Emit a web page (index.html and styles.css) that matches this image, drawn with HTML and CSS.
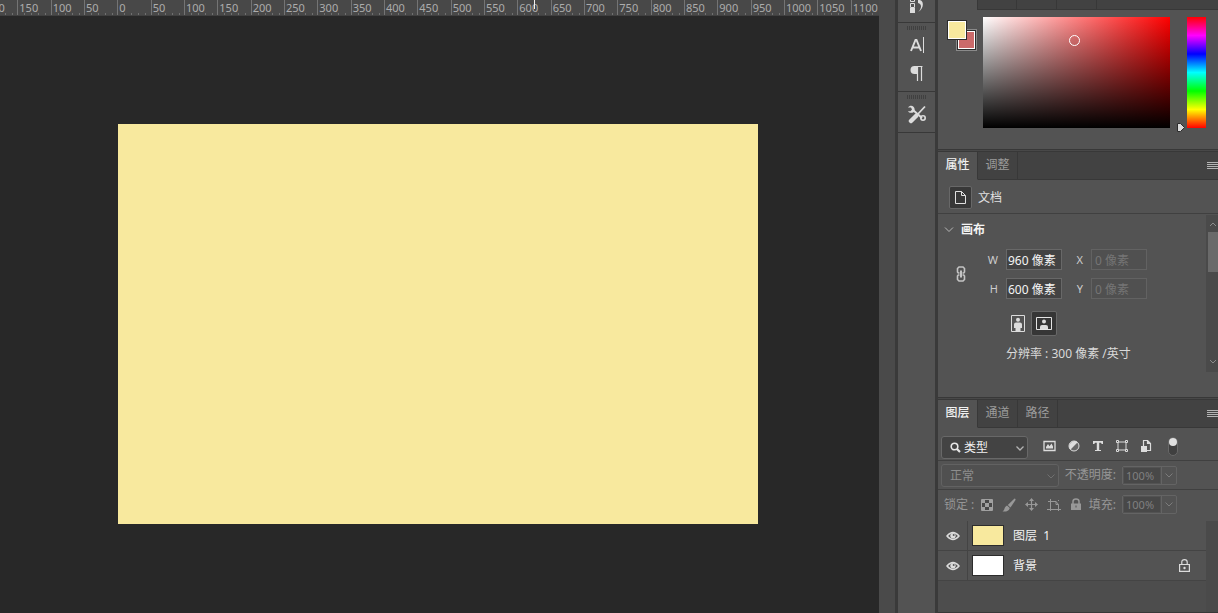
FILE: index.html
```
<!DOCTYPE html>
<html lang="zh-CN">
<head>
<meta charset="utf-8">
<title>图像编辑器</title>
<link rel="stylesheet" href="styles.css">
</head>
<body>
<div class="app">
  <main class="workspace">
    <div class="ruler">
      <div class="ruler-scale">
        <span>200</span><span>150</span><span>100</span><span>50</span><span>0</span><span>50</span><span>100</span><span>150</span><span>200</span><span>250</span><span>300</span><span>350</span><span>400</span><span>450</span><span>500</span><span>550</span><span>600</span><span>650</span><span>700</span><span>750</span><span>800</span><span>850</span><span>900</span><span>950</span><span>1000</span><span>1050</span><span>1100</span>
      </div>
      <i class="ruler-cursor"></i>
    </div>
    <div class="stage"><div class="artboard"></div></div>
  </main>
  <div class="vscroll"></div>

  <nav class="dock" aria-label="折叠面板">
    <div class="dock-group dock-first">
      <button class="dock-btn" aria-label="历史记录">
        <svg width="18" height="18" viewBox="0 0 18 18"><path d="M2.500 2.500h4v4h-4zM2.500 8.500h4v4h-4z" fill="none" stroke="#dcdcdc"/><path d="M2 13h5v5H2z" fill="#dcdcdc"/><path d="M10 5c6-1 7 8 0 12 4-4 4-8 0-9z" fill="#dcdcdc"/></svg>
      </button>
    </div>
    <div class="dock-group">
      <i class="grip"></i>
      <button class="dock-btn" aria-label="字符">
        <svg width="18" height="18" viewBox="0 0 18 18"><path d="M3 15 7.500 4h1L13 15M4.500 11.500h7" fill="none" stroke="#dcdcdc" stroke-width="1.900"/><path d="M15.500 1v16" stroke="#dcdcdc"/></svg>
      </button>
      <button class="dock-btn" aria-label="段落">
        <svg width="18" height="18" viewBox="0 0 18 18"><path d="M8 2H6.500a4 4 0 0 0 0 8H9V2z" fill="#dcdcdc"/><path d="M6 2.500h8.500M9.500 2v15M13.500 2v15" fill="none" stroke="#dcdcdc" stroke-width="1.200"/></svg>
      </button>
    </div>
    <div class="dock-group dock-short">
      <i class="grip"></i>
      <button class="dock-btn" aria-label="工具预设">
        <svg width="20" height="20" viewBox="0 0 20 20" fill="none" stroke="#dcdcdc"><path d="m6 6 9 8" stroke-width="1.900"/><path d="M1 3.500h3l1 2-1.500 1.700H1c1 2 4 2 5.500 1S8 4 6.500 2.700 2.500 1.500 1 3.500z" fill="#dcdcdc" stroke="none"/><circle cx="16" cy="14" r="2.200" stroke-width="1.600"/><path d="m18 2.500-8 8.500" stroke-width="1.800"/><path d="m9 12-5 5" stroke-width="4.500" stroke-linecap="round"/></svg>
      </button>
    </div>
  </nav>

  <aside class="panels">
    <section class="panel color-panel">
      <div class="tabbar tabbar-cut"><i></i><i></i><i></i></div>
      <div class="color-body">
        <div class="swatches"><button class="swatch swatch-back" aria-label="背景色"></button><button class="swatch swatch-front" aria-label="前景色"></button></div>
        <div class="spectrum"><i class="ring"></i></div>
        <div class="hue">
          <svg class="hue-mark" width="10" height="11" viewBox="0 0 10 11"><path d="M1.500 1.500h3l4 4-4 4h-3z" fill="#dcdcdc" stroke="#2c2c2c"/></svg>
        </div>
      </div>
    </section>

    <section class="panel props-panel">
      <div class="tabbar">
        <button class="tab active">属性</button><button class="tab">调整</button>
        <button class="menu" aria-label="面板菜单"></button>
      </div>
      <div class="doc-row">
        <button class="doc-btn" aria-label="文档">
          <svg width="13" height="15" viewBox="0 0 13 15" fill="none" stroke="#e0e0e0"><path d="M1.500 1.500h6l4 4v8h-10zM7.500 1.500v4h4"/></svg>
        </button>
        <span>文档</span>
      </div>
      <div class="props-body">
        <div class="canvas-form">
          <h2 class="section-title"><svg width="10" height="6" viewBox="0 0 10 6" fill="none" stroke="#b8b8b8"><path d="m1 .5 4 4 4-4"/></svg>画布</h2>
          <div class="size-grid">
            <button class="link-btn" aria-label="链接">
              <svg width="10" height="16" viewBox="0 0 10 16" fill="none" stroke="#c4c4c4" stroke-width="1.600"><path d="M3.500 7H2.300L1.500 6V2.500L3 1h4l1.500 1.500V6l-.8 1H6.500M3.500 9H2.300l-.8 1v3.500L3 15h4l1.500-1.500V10l-.8-1H6.500"/><path d="M5 4.500v7" stroke-width="2"/></svg>
            </button>
            <label for="w">W</label><input id="w" value="960 像素">
            <label for="x">X</label><input id="x" value="0 像素" disabled>
            <label for="h">H</label><input id="h" value="600 像素">
            <label for="y">Y</label><input id="y" value="0 像素" disabled>
          </div>
          <div class="orient">
            <button class="orient-btn" aria-label="纵向">
              <svg width="14" height="17" viewBox="0 0 14 17"><path d="M.5.500h13v16H.5z" fill="none" stroke="#dcdcdc"/><circle cx="7" cy="4.800" r="2" fill="#dcdcdc"/><path d="M5 7.500h4q2 0 2 2V13H9.500v3h-5v-3H3V9.500q0-2 2-2z" fill="#dcdcdc"/></svg>
            </button>
            <button class="orient-btn chosen" aria-label="横向">
              <svg width="16" height="13" viewBox="0 0 16 13"><path d="M.5.500h15v12H.5z" fill="none" stroke="#e4e4e4"/><circle cx="8" cy="4.500" r="2" fill="#dcdcdc"/><path d="M4 12v-2q0-2 2-2h4q2 0 2 2v2z" fill="#dcdcdc"/></svg>
            </button>
          </div>
          <p class="resolution">分辨率 : 300 像素 /英寸</p>
        </div>
        <div class="scrollbar">
          <svg width="8" height="5" viewBox="0 0 8 5" fill="none" stroke="#8c8c8c"><path d="m1 4 3-3 3 3"/></svg>
          <i class="thumb"></i>
          <svg class="down" width="8" height="5" viewBox="0 0 8 5" fill="none" stroke="#8c8c8c"><path d="m1 1 3 3 3-3"/></svg>
        </div>
      </div>
    </section>

    <section class="panel layers-panel">
      <div class="tabbar">
        <button class="tab active">图层</button><button class="tab">通道</button><button class="tab">路径</button>
        <button class="menu" aria-label="面板菜单"></button>
      </div>
      <div class="filter-row">
        <div class="select-box kind">
          <svg class="lens" width="11" height="11" viewBox="0 0 11 11" fill="none" stroke="#e6e6e6"><circle cx="4.500" cy="4.500" r="3.300" stroke-width="1.600"/><path d="m7 7 3 3" stroke-width="2.200"/></svg>
          <select aria-label="过滤类型"><option>类型</option></select>
          <svg class="arrow" width="8" height="5" viewBox="0 0 8 5" fill="none" stroke="#b4b4b4" stroke-width="1.300"><path d="m.5.500 3.500 3.500 3.500-3.500"/></svg>
        </div>
        <div class="filters">
          <button aria-label="像素图层"><svg width="13" height="12" viewBox="0 0 13 12"><path d="M1 1.500h11v9H1z" fill="none" stroke="#dcdcdc" stroke-width="1.300"/><path d="M3 8.500V7l2-3 1.500 2.200L8.500 3.500 10 6.500v2z" fill="#dcdcdc"/></svg></button>
          <button aria-label="调整图层"><svg width="12" height="12" viewBox="0 0 12 12"><circle cx="6" cy="6" r="5" fill="#666" stroke="#dcdcdc"/><path d="M9.700 2.300A5.300 5.300 0 0 0 2.300 9.700z" fill="#dcdcdc"/></svg></button>
          <button aria-label="文字图层"><svg width="12" height="12" viewBox="0 0 12 12"><path d="M1 1h10v3H9.700L9 2.700H7.200v7.200H9V11H3V9.900h1.800V2.700H3L2.300 4H1z" fill="#dcdcdc"/></svg></button>
          <button aria-label="形状图层"><svg width="12" height="12" viewBox="0 0 12 12" fill="#535353" stroke="#dcdcdc"><path d="M2 2h8v8H2z"/><path d="M.5.500h2v2h-2zM9.500.500h2v2h-2zM.5 9.500h2v2h-2zM9.500 9.500h2v2h-2z"/></svg></button>
          <button aria-label="智能对象"><svg width="12" height="12" viewBox="0 0 12 12"><path d="M3.500 6V.500h4l3 3v7H7M7.500.500v3h3" fill="none" stroke="#dcdcdc" stroke-width="1.200"/><path d="M1 6h6v6H1z" fill="#dcdcdc"/></svg></button>
        </div>
        <label class="toggle"><input type="checkbox" checked aria-label="过滤开关"></label>
      </div>
      <div class="blend-row">
        <div class="select-box blend">
          <select aria-label="混合模式" disabled><option>正常</option></select>
          <svg class="arrow" width="8" height="5" viewBox="0 0 8 5" fill="none" stroke="#707070"><path d="m.5.500 3.500 3.500 3.500-3.500"/></svg>
        </div>
        <label class="pct-label" for="opacity">不透明度:</label>
        <div class="pct"><input id="opacity" value="100%" disabled><button disabled aria-label="不透明度滑块"><svg width="8" height="5" viewBox="0 0 8 5" fill="none" stroke="#7c7c7c"><path d="m.5.500 3.500 3.500 3.500-3.500"/></svg></button></div>
      </div>
      <div class="lock-row">
        <span class="lock-label">锁定 :</span>
        <div class="locks">
          <button aria-label="锁定透明像素"><svg width="12" height="12" viewBox="0 0 12 12"><path d="M.5.500h11v11H.5z" fill="#484848" stroke="#a0a0a0"/><path d="M1 1h3v3H1zM8 1h3v3H8zM4 4h4v4H4zM1 8h3v3H1zM8 8h3v3H8z" fill="#a0a0a0"/></svg></button>
          <button aria-label="锁定图像像素"><svg width="14" height="14" viewBox="0 0 14 14" fill="#989898"><path d="M12.500.500q1.500 0 1 1.500L8.500 9.500 5.800 7z"/><path d="m5 7.500 2.800 2.500C7 13 4 14 .5 13.500 3 12 2 9 5 7.500z"/></svg></button>
          <button aria-label="锁定位置"><svg width="13" height="13" viewBox="0 0 13 13"><path d="M6.500 2v9M2 6.500h9" stroke="#989898" stroke-width="1.200"/><path d="m6.500 0 2.500 3H4zM6.500 13 4 10h5zM0 6.500 3 4v5zM13 6.500 10 9V4z" fill="#989898"/></svg></button>
          <button aria-label="防止嵌套"><svg width="14" height="14" viewBox="0 0 14 14" fill="none" stroke="#989898"><path d="M3.500 1v12M1 3.500h8l2.500 3V13M0 11.500h14M9 3.500v3h2.500M11 3l1-1"/></svg></button>
          <button aria-label="锁定全部"><svg width="12" height="13" viewBox="0 0 12 13"><path d="M1 5.500h10V12H1z" fill="#989898"/><path d="M3 6V3.500q0-2.500 3-2.500t3 2.500V6" fill="none" stroke="#989898" stroke-width="1.500"/><path d="M5.500 7.500h1v2h-1z" fill="#505050"/></svg></button>
        </div>
        <label class="pct-label" for="fill">填充:</label>
        <div class="pct"><input id="fill" value="100%" disabled><button disabled aria-label="填充滑块"><svg width="8" height="5" viewBox="0 0 8 5" fill="none" stroke="#7c7c7c"><path d="m.5.500 3.500 3.500 3.500-3.500"/></svg></button></div>
      </div>
      <div class="layer-area">
        <ul class="layers">
          <li>
            <button class="eye" aria-label="可见性"><svg width="14" height="10" viewBox="0 0 14 10"><path d="M1 5q6-7 12 0-6 7-12 0z" fill="none" stroke="#dcdcdc" stroke-width="1.500"/><circle cx="7" cy="4.800" r="2.700" fill="#dcdcdc"/><circle cx="7.700" cy="4" r="1" fill="#555"/></svg></button>
            <i class="thumbnail cream"></i><span>图层 &nbsp;1</span>
          </li>
          <li>
            <button class="eye" aria-label="可见性"><svg width="14" height="10" viewBox="0 0 14 10"><path d="M1 5q6-7 12 0-6 7-12 0z" fill="none" stroke="#dcdcdc" stroke-width="1.500"/><circle cx="7" cy="4.800" r="2.700" fill="#dcdcdc"/><circle cx="7.700" cy="4" r="1" fill="#555"/></svg></button>
            <i class="thumbnail white"></i><span>背景</span>
            <svg class="locked" width="11" height="13" viewBox="0 0 11 13"><path d="M.6 5.500h9.800v6.900H.6zM2.800 5V3Q2.800.700 5.500.700T8.200 3v2" fill="none" stroke="#dcdcdc" stroke-width="1.200"/><circle cx="5.500" cy="9" r="1.200" fill="#dcdcdc"/></svg>
          </li>
        </ul>
        <div class="layer-scroll"></div>
      </div>
    </section>
  </aside>
</div>
</body>
</html>
```
FILE: styles.css
```
* { box-sizing: border-box; }
body {
  margin: 0;
  background: #282828;
  color: #e0e0e0;
  font: 12px/16px "Noto Sans", "Noto Sans CJK SC", sans-serif;
}
button, input, select { font: inherit; color: inherit; margin: 0; }
button { border: 0; padding: 0; background: none; display: flex; align-items: center; justify-content: center; }
svg { display: block; flex: none; }
.app { display: flex; height: 100vh; overflow: hidden; }

/* Workspace */
.workspace { flex: 1; min-width: 0; display: flex; flex-direction: column; }
.ruler { position: relative; height: 16px; flex: none; overflow: hidden; background: #484848; border-bottom: 1px solid #404040; }
.ruler-scale { display: grid; grid-template-columns: repeat(27, 1fr); width: 900px; height: 15px; margin-left: -16px; }
.ruler-scale span {
  padding-left: 1px;
  border-left: 1px solid #747474;
  color: #acacac;
  font-size: 11px;
  line-height: 16px;
  background: repeating-linear-gradient(90deg, transparent 0 6px, #707070 6px 7px) 0 100% / 100% 3px no-repeat;
}
.ruler-cursor { position: absolute; left: 534px; top: 0; width: 1px; height: 9px; background: #f0f0f0; }
.stage { flex: 1; padding: 108px 0 0 118px; }
.artboard { width: 640px; height: 400px; background: #f8e99e; }
.vscroll { width: 16px; background: #4a4a4a; }

/* Collapsed dock */
.dock { width: 43px; background: #535353; border: solid #3a3a3a; border-width: 0 3px; }
.dock-group { height: 69px; padding-top: 3px; border-bottom: 1px solid #383838; display: flex; flex-direction: column; align-items: center; }
.dock-group.dock-first { height: 23px; padding: 0 0 9px; justify-content: flex-end; }
.dock-group.dock-short { height: 41px; }
.grip { width: 19px; height: 4px; flex: none; margin-bottom: 1px; background: repeating-linear-gradient(90deg, #404040 0 1px, #535353 1px 2px); }
.dock-btn { height: 28px; flex: none; }
.dock-first .dock-btn { height: 18px; }

/* Panels */
.panels { width: 280px; display: flex; flex-direction: column; background: #484848; }
.panel { background: #535353; border-bottom: 1px solid #383838; }
.panel + .panel { margin-top: 1px; border-top: 1px solid #383838; }
.tabbar { display: flex; height: 28px; background: #424242; }
.tab { width: 40px; padding-bottom: 2px; color: #9c9c9c; border: solid #383838; border-width: 0 1px 1px 0; }
.tab.active { background: #535353; color: #f0f0f0; font-weight: 500; border-bottom-color: #535353; }
.menu { flex: 1; justify-content: flex-end; border-bottom: 1px solid #383838; }
.menu::after { content: ""; width: 11px; height: 7px; background: repeating-linear-gradient(#b4b4b4 0 1px, #424242 1px 2px); }

/* Colour */
.color-panel { height: 150px; }
.tabbar-cut { height: 10px; margin-left: 39px; border: solid #383838; border-width: 0 0 1px 1px; }
.tabbar-cut i { width: 40px; border-right: 1px solid #383838; }
.tabbar-cut i:first-child { width: 39px; }
.color-body { display: flex; padding: 7px 12px 0 9px; }
.swatches { display: grid; width: 36px; height: 36px; flex: none; grid-template-columns: 9px 11px 10px; grid-template-rows: 3px 9px 11px 11px; }
.swatch { border: 1px solid #2c2c2c; box-shadow: inset 0 0 0 1px #fff; }
.swatch-back { grid-area: 3 / 2 / 5 / 4; background: #cb6a6a; outline: 1px solid #8a8a8a; outline-offset: -1px; border-width: 2px; }
.swatch-front { grid-area: 2 / 1 / 4 / 3; background: #f8e99e; z-index: 1; }
.spectrum { position: relative; flex: 1; height: 111px; background: linear-gradient(to top, #000, transparent), linear-gradient(to right, #fff, #f00); }
.ring { position: absolute; left: 86px; top: 18px; width: 11px; height: 11px; border: 1px solid #fff; border-radius: 50%; }
.hue { position: relative; width: 19px; margin-left: 17px; background: linear-gradient(#f00, #f0f, #00f, #0ff, #0f0, #ff0, #f00); }
.hue-mark { position: absolute; left: -11px; bottom: -5px; }

/* Properties */
.props-panel { height: 247px; }
.doc-row { display: flex; align-items: center; gap: 6px; height: 34px; padding: 1px 0 0 11px; border-bottom: 1px solid #404040; }
.doc-row span { padding-top: 2px; }
.doc-btn { width: 23px; height: 23px; background: #383838; border: 1px solid #686868; border-radius: 2px; }
.props-body { display: flex; height: 158px; }
.canvas-form { flex: 1; }
.section-title { display: flex; align-items: center; gap: 7px; height: 30px; margin: 0; padding: 1px 0 0 6px; font-size: 12px; font-weight: 700; color: #f4f4f4; }
.size-grid { display: grid; grid-template-columns: 10px 24px 56px 13px 56px; grid-auto-rows: 21px; gap: 8px; margin: 5px 0 0 18px; align-items: center; }
.size-grid label { font-size: 11px; color: #cdcdcd; text-align: right; }
.size-grid input { width: 100%; height: 21px; padding: 0 0 0 1px; font-size: 12px; color: #f4f4f4; background: #434343; border: 1px solid #686868; }
.size-grid input:disabled { padding-left: 3px; color: #757575; background: #505050; border-color: #626262; }
.link-btn { grid-row: 1 / 3; }
.orient { display: flex; margin: 12px 0 0 67px; }
.orient-btn { width: 26px; height: 25px; border: 1px solid transparent; border-radius: 2px; }
.orient-btn.chosen { background: #363636; border-color: #686868; }
.resolution { margin: 10px 0 0 68px; color: #dadada; }
.scrollbar { display: flex; flex-direction: column; align-items: center; width: 12px; margin-top: 1px; padding: 7px 0 8px 2px; background: #4a4a4a; }
.thumb { width: 10px; height: 40px; margin-top: 5px; background: #6a6a6a; }
.scrollbar .down { margin-top: auto; }

/* Layers */
.layers-panel { flex: 1; display: flex; flex-direction: column; }
.layers-panel .tabbar { flex: none; }
.filter-row, .blend-row, .lock-row { display: flex; align-items: center; flex: none; padding-left: 3px; }
.filter-row { height: 33px; align-items: flex-start; padding-top: 8px; border-bottom: 1px solid #404040; }
.blend-row { height: 29px; border-bottom: 1px solid #404040; }
.lock-row { height: 31px; padding: 0 0 2px 6px; color: #969696; }
.select-box { position: relative; }
.select-box select { display: block; width: 100%; height: 23px; appearance: none; border: 1px solid #686868; border-radius: 3px; }
.kind { width: 87px; }
.kind select { padding: 0 18px 0 22px; background: #434343; color: #f0f0f0; }
.blend { width: 118px; }
.blend select { padding: 2px 18px 0 8px; background: #505050; border-color: #626262; color: #8e8e8e; opacity: 1; }
.select-box .arrow { position: absolute; right: 4px; top: 10px; pointer-events: none; }
.select-box .lens { position: absolute; left: 9px; top: 6px; }
.filters { display: flex; gap: 12px; margin-left: 15px; padding-top: 4px; }
.toggle { margin-left: 16px; padding-top: 1px; display: flex; }
.toggle input { appearance: none; width: 10px; height: 19px; margin: 0; border: 1px solid #686868; border-radius: 5px; background: #404040; }
.toggle input::before { content: ""; display: block; width: 8px; height: 8px; border-radius: 50%; background: #e0e0e0; }
.pct-label { margin-left: auto; color: #969696; }
.pct { display: flex; width: 55px; height: 19px; margin: 0 41px 0 6px; border: 1px solid #646464; border-radius: 2px; }
.pct input { width: 38px; height: 17px; padding: 0 0 0 2px; font-size: 11px; border: 1px solid #535353; background: #484848; color: #808080; }
.pct button { flex: 1; border-left: 1px solid #646464; }
.locks { display: flex; align-items: center; gap: 9px; margin-left: 7px; }
.layer-area { flex: 1; display: flex; min-height: 0; background: #4d4d4d; }
.layers { flex: 1; list-style: none; margin: 0; padding: 0; }
.layers li { display: flex; align-items: center; height: 30px; background: #535353; border-bottom: 1px solid #444; color: #f2f2f2; }
.layers span { padding-top: 1px; }
.eye { width: 30px; height: 100%; border-right: 1px solid #444; }
.thumbnail { width: 32px; height: 21px; margin: 0 9px 0 4px; border: 1px solid #2c2c2c; }
.cream { background: #f8e99e; }
.white { background: #fff; }
.locked { margin: 0 16px 0 auto; }
.layer-scroll { width: 12px; background: #4a4a4a; }
```
